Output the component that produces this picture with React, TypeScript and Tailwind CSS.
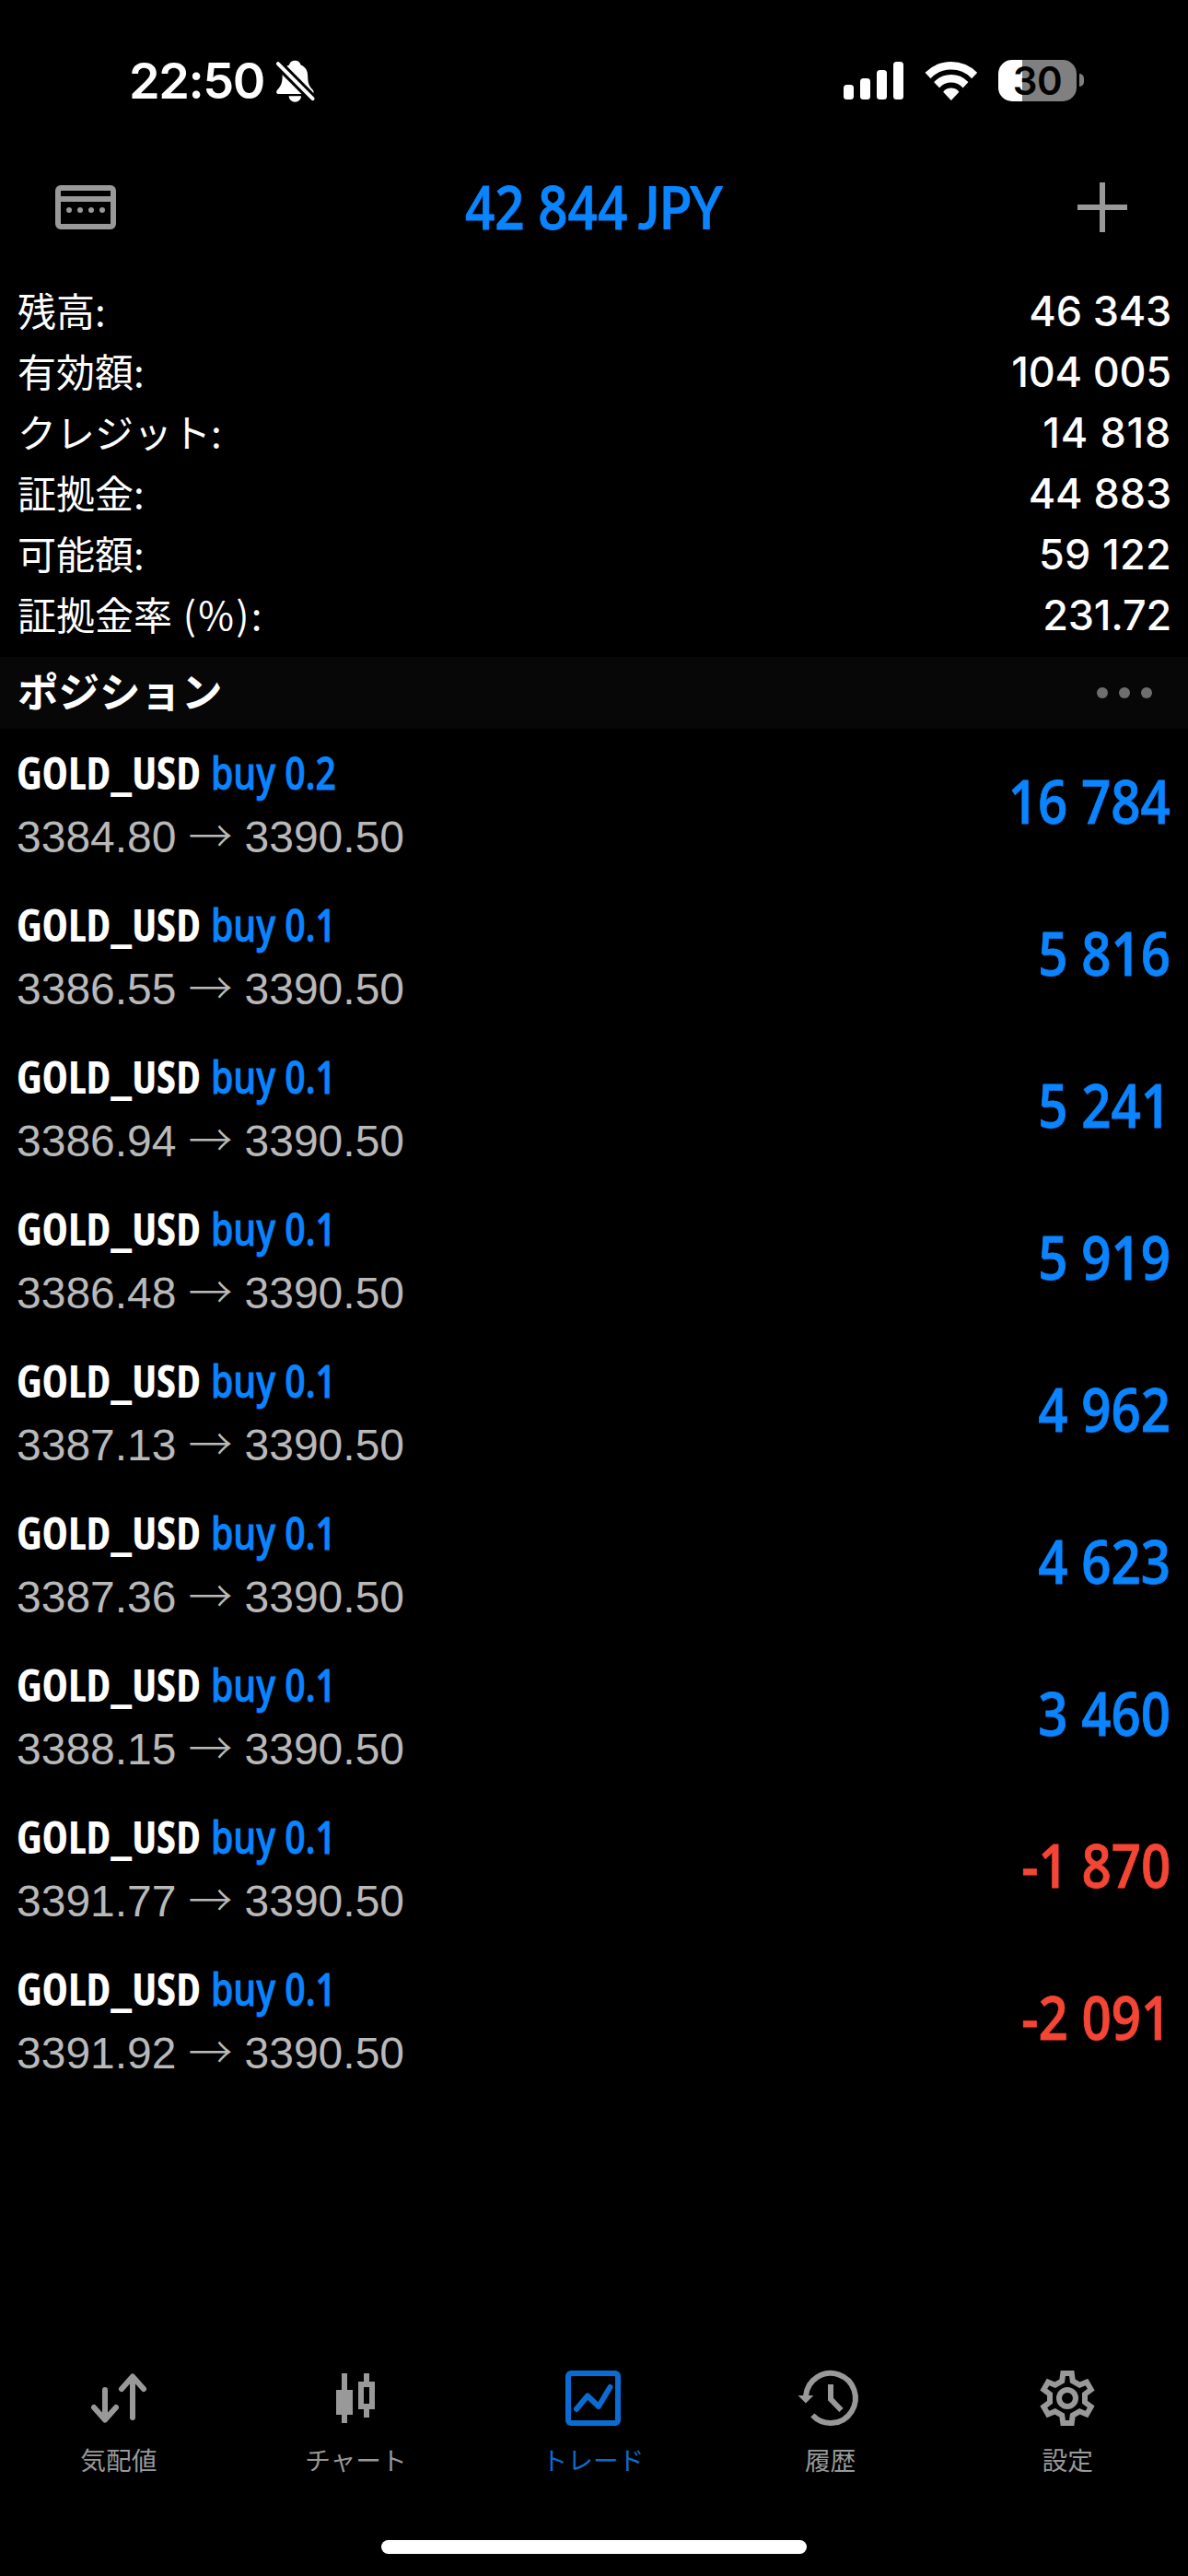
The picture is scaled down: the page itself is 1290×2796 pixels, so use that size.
import { type ReactNode } from "react";

const summary = [
  { label: "残高:", value: "46 343", tracking: "tracking-[-0.2px]" },
  { label: "有効額:", value: "104 005", tracking: "tracking-[-0.2px]" },
  { label: "クレジット:", value: "14 818", tracking: "tracking-[0.7px]" },
  { label: "証拠金:", value: "44 883", tracking: "tracking-[-0.1px]" },
  { label: "可能額:", value: "59 122", tracking: "tracking-[0.3px]" },
  { label: "証拠金率", suffix: " (%):", value: "231.72", tracking: "tracking-[-0.2px]" },
];

const positions = [
  { volume: "0.2", open: "3384.80", profit: "16 784" },
  { volume: "0.1", open: "3386.55", profit: "5 816" },
  { volume: "0.1", open: "3386.94", profit: "5 241" },
  { volume: "0.1", open: "3386.48", profit: "5 919" },
  { volume: "0.1", open: "3387.13", profit: "4 962" },
  { volume: "0.1", open: "3387.36", profit: "4 623" },
  { volume: "0.1", open: "3388.15", profit: "3 460" },
  { volume: "0.1", open: "3391.77", profit: "-1 870" },
  { volume: "0.1", open: "3391.92", profit: "-2 091" },
];

function BellSlash() {
  return (
    <svg width="46" height="48" viewBox="0 0 46 48" className="mt-[2px] ml-[12px]">
      <path
        d="M21.3 1.7C17.5 1.7 15.6 4 15 6.6C10 8.5 7.6 13 7.6 18.5C7.6 26 6 29.5 2.6 33C0.2 35.6 0.7 38 4 38H38.8C42 38 42.6 35.6 40.2 33C36.6 29.5 35.2 26 35.2 18.5C35.2 13 32.8 8.5 27.6 6.6C27 4 25.2 1.7 21.3 1.7Z"
        fill="#fff"
      />
      <path d="M14.7 40.3H28C28 44 25 46.7 21.3 46.7C17.7 46.7 14.7 44 14.7 40.3Z" fill="#fff" />
      <path d="M-1 1.3L44.4 47" stroke="#000" strokeWidth="10" />
      <path d="M2.9 5.2L40.6 43.1" stroke="#fff" strokeWidth="4" strokeLinecap="round" />
    </svg>
  );
}

function Signal() {
  return (
    <svg width="65" height="41" viewBox="0 0 65 41" fill="#fff">
      <rect x="0" y="25" width="11" height="16" rx="3.5" />
      <rect x="18" y="18" width="11" height="23" rx="3.5" />
      <rect x="36" y="9" width="11" height="32" rx="3.5" />
      <rect x="54" y="0" width="11" height="41" rx="3.5" />
    </svg>
  );
}

function Wifi() {
  return (
    <svg width="58" height="43" viewBox="0 0 58 43" className="ml-[23px]">
      <clipPath id="fan">
        <path d="M28.8 43L-17.2 -6H74.8Z" />
      </clipPath>
      <g clipPath="url(#fan)">
        <circle cx="28.8" cy="40.5" r="35.2" fill="none" stroke="#fff" strokeWidth="8.6" />
        <circle cx="28.8" cy="40.5" r="21.2" fill="none" stroke="#fff" strokeWidth="8.6" />
        <circle cx="28.8" cy="40.5" r="11" fill="#fff" />
      </g>
    </svg>
  );
}

function Battery() {
  return (
    <div className="ml-[22px] flex items-center">
      <div className="flex h-[45px] w-[85px] items-center justify-center rounded-[15px] bg-linear-to-r from-white from-[26px] to-[#808080] to-[26px] text-[42px] leading-[45px] font-semibold tracking-[-0.5px] text-black">
        30
      </div>
      <div className="ml-[3px] h-[14px] w-[5px] rounded-r-full bg-[#808080]" />
    </div>
  );
}

function CardIcon() {
  return (
    <svg width="66" height="48" viewBox="0 0 66 48" fill="none" stroke="#999" strokeWidth="6">
      <rect x="3" y="3" width="60" height="42" rx="3" />
      <path d="M3 15H63" />
      <g fill="#999" stroke="none">
        <circle cx="15" cy="27" r="3" />
        <circle cx="27" cy="27" r="3" />
        <circle cx="39" cy="27" r="3" />
        <circle cx="51" cy="27" r="3" />
      </g>
    </svg>
  );
}

function Tab({ label, active, children }: { label: string; active?: boolean; children: ReactNode }) {
  return (
    <div className={"flex w-[258px] flex-col items-center " + (active ? "text-[#0a6cd2]" : "text-[#999]")}>
      <svg width="60" height="60" viewBox="0 0 60 60" fill="none" stroke="currentColor" strokeWidth="6" className="overflow-visible">
        {children}
      </svg>
      <div className="mt-[16px] font-['Noto_Sans_CJK_JP',sans-serif] text-[27.7px] leading-[40px]">{label}</div>
    </div>
  );
}

export default function App() {
  return (
    <div className="flex h-[2796px] w-[1290px] flex-col overflow-hidden bg-black font-['Inter',sans-serif] text-white">
      <div className="flex h-[174px] items-center pl-[140px]">
        <div className="pt-[1px] text-[54px] leading-[60px] font-semibold tracking-[-1.4px]">22:50</div>
        <BellSlash />
        <div className="mr-[113px] ml-auto flex items-center">
          <Signal />
          <Wifi />
          <Battery />
        </div>
      </div>

      <div className="mb-[27px] flex h-[102px] items-center justify-between pr-[66px] pl-[60px]">
        <CardIcon />
        <div className="mr-[6px] w-[281px] pb-[4px]">
          <div className="flex w-max origin-left scale-x-[0.856] items-baseline font-['Open_Sans',sans-serif] text-[66px] leading-[90px] font-semibold whitespace-pre text-[#0a84ff] [-webkit-text-stroke:0.8px]">
            <span>42 844 </span>
            <span className="-ml-[4px] font-['Lato',sans-serif] text-[65px] font-bold tracking-[-0.5px] [-webkit-text-stroke:0px]">JPY</span>
          </div>
        </div>
        <svg width="54" height="54" viewBox="0 0 54 54" stroke="#999" strokeWidth="6">
          <path d="M27 0V54M0 27H54" />
        </svg>
      </div>

      {summary.map((s) => (
        <div key={s.label} className="flex h-[66px] items-baseline justify-between pr-[18px] pl-[19px] leading-[66px]">
          <div className="font-['Noto_Sans_CJK_JP',sans-serif] text-[42px] whitespace-pre">
            {s.label}
            {s.suffix && <span className="tracking-[2.3px]">{s.suffix}</span>}
          </div>
          <div className={"text-[45px] font-medium " + s.tracking}>{s.value}</div>
        </div>
      ))}

      <div className="mt-[14px] flex h-[78px] justify-between bg-[#070707] pr-[39px] pl-[19px]">
        <div className="font-['Noto_Sans_CJK_JP',sans-serif] text-[44.5px] leading-[71px] font-bold">ポジション</div>
        <div className="flex items-center gap-[12px]">
          <div className="size-[12px] rounded-full bg-[#6e6e6e]" />
          <div className="size-[12px] rounded-full bg-[#6e6e6e]" />
          <div className="size-[12px] rounded-full bg-[#6e6e6e]" />
        </div>
      </div>

      {positions.map((p) => (
        <div key={p.open} className="flex h-[165px] justify-between pr-[19px] pl-[18px]">
          <div className="pt-[13px] leading-[70px] whitespace-nowrap">
            <div className="flex font-['Open_Sans',sans-serif] text-[48px]">
              <span className="font-bold [font-stretch:75%]">GOLD_USD</span>
              <span className="ml-[11px] origin-left scale-x-[0.815] font-semibold text-[#0a84ff] [-webkit-text-stroke:0.8px]">buy {p.volume}</span>
            </div>
            <div className="flex font-['Liberation_Sans',sans-serif] text-[48px] text-[#b9b9b9]">
              <span>{p.open}</span>
              <span className="relative -top-[5px] w-[74px] text-center font-['Noto_Sans_CJK_JP',sans-serif] font-light">→</span>
              <span>3390.50</span>
            </div>
          </div>
          <div
            className={
              "origin-right scale-x-[0.856] font-['Open_Sans',sans-serif] text-[66px] leading-[155px] font-semibold whitespace-nowrap [-webkit-text-stroke:0.8px] " +
              (p.profit.startsWith("-") ? "text-[#f44535]" : "text-[#0a84ff]")
            }
          >
            {p.profit}
          </div>
        </div>
      ))}

      <div className="mt-auto mb-[68px] flex w-[1288px]">
        <Tab label="気配値">
          <g strokeLinecap="round" strokeLinejoin="round">
            <path d="M15 21V53M3 40L15 53.5L27 40" />
            <path d="M45 51V7M33 20L45 6.5L57 20" />
          </g>
        </Tab>
        <Tab label="チャート">
          <path d="M9 21H27V48H9Z" fill="currentColor" stroke="none" />
          <path d="M18 3V57M42 3V12M42 42V51M36 15H48V39H36Z" />
        </Tab>
        <Tab label="トレード" active>
          <rect x="3" y="3" width="54" height="54" rx="3" />
          <path d="M12 41.7L24 27.5L36 39L48.5 18" strokeLinecap="round" strokeLinejoin="round" />
        </Tab>
        <Tab label="履歴">
          <path d="M3 28V27.5A27 27 0 1 1 10.3 48.5" />
          <path d="M30 15V31L41.5 43" />
          <path d="M-5.5 27H11.3L3 35.4Z" fill="currentColor" stroke="none" />
        </Tab>
        <Tab label="設定">
          <path d="M25.3 3H34.7L35.8 11.4L43.3 15.7L51 12.5L55.7 20.6L49 25.7V34.3L55.7 39.4L51 47.5L43.3 44.3L35.8 48.6L34.7 57H25.3L24.2 48.6L16.7 44.3L9 47.5L4.3 39.4L11 34.3V25.7L4.3 20.6L9 12.5L16.7 15.7L24.2 11.4Z" />
          <circle cx="30" cy="30" r="9" />
        </Tab>
      </div>
      <div className="mb-[24px] ml-[414px] h-[15px] w-[462px] shrink-0 rounded-full bg-white" />
    </div>
  );
}
